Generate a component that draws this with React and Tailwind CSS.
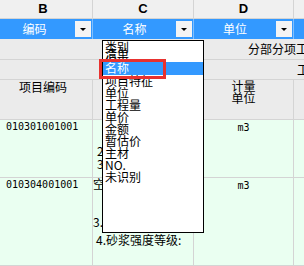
import React from 'react';

const cjk = "font-['Noto_Sans_CJK_SC',sans-serif]";
const mono = "font-['DejaVu_Sans_Mono',monospace] text-[10px]";

const DropButton = () => (
  <div className="w-[16px] h-[16px] mr-[1px] bg-[#f4f4f4] flex items-center justify-center shrink-0">
    <div className="w-0 h-0 border-l-[3px] border-r-[3px] border-t-[3px] border-l-transparent border-r-transparent border-t-black" />
  </div>
);

const options = [
  { label: '类别', h: 'h-[7px]' },
  { label: '清单', h: 'h-[8px]' },
  { label: '编码', h: 'h-[6px]' },
  { label: '名称', h: 'h-[13px]', selected: true },
  { label: '项目特征', h: 'h-[12px]' },
  { label: '单位', h: 'h-[12px]' },
  { label: '工程量', h: 'h-[12px]' },
  { label: '单价', h: 'h-[12px]' },
  { label: '金额', h: 'h-[12px]' },
  { label: '暂估价', h: 'h-[12px]' },
  { label: '主材', h: 'h-[12px]' },
  { label: 'NO.', h: 'h-[12px]' },
  { label: '未识别', h: 'h-[12px]' },
];

export default function App() {
  return (
    <div className={`relative w-[304px] h-[266px] overflow-hidden bg-white text-[12px] text-black ${cjk}`}>
      {/* column letters */}
      <div className="flex h-[19px] bg-[#f0f0f0] border-b border-[#d4d4d4]">
        <div className="w-[99px] -ml-[6px] shrink-0 border-r border-[#d4d4d4] flex items-center justify-center font-['Liberation_Sans',sans-serif] font-bold text-[13px]">B</div>
        <div className="w-[101px] shrink-0 border-r border-[#d4d4d4] flex items-center justify-center font-['Liberation_Sans',sans-serif] font-bold text-[13px]">C</div>
        <div className="w-[100px] shrink-0 border-r border-[#d4d4d4] flex items-center justify-center font-['Liberation_Sans',sans-serif] font-bold text-[13px]">D</div>
        <div className="flex-1" />
      </div>

      {/* mapping row */}
      <div className="flex h-[20px] bg-[#3399ff] text-white">
        <div className="w-[99px] -ml-[6px] shrink-0 border-r border-[#7fbfff] flex items-center">
          <span className="flex-1 text-center">编码</span>
          <DropButton />
        </div>
        <div className="w-[101px] shrink-0 border-r border-[#7fbfff] flex items-center">
          <span className="flex-1 text-center">名称</span>
          <DropButton />
        </div>
        <div className="w-[100px] shrink-0 border-r border-[#7fbfff] flex items-center">
          <span className="flex-1 text-center">单位</span>
          <DropButton />
        </div>
        <div className="flex-1" />
      </div>

      {/* title rows */}
      <div className="h-[21px] bg-[#ebebeb] border-b border-[#d4d4d4] flex items-center pl-[248px] whitespace-nowrap text-[12px]">
        分部分项工程量清单
      </div>
      <div className="h-[20px] bg-[#ebebeb] border-b border-[#d4d4d4] flex items-center pl-[297px] whitespace-nowrap text-[12px]">
        工程名称：
      </div>

      {/* header */}
      <div className="flex h-[40px] bg-[#ebebeb] border-b border-[#d4d4d4] leading-[12px]">
        <div className="w-[99px] -ml-[6px] shrink-0 border-r border-[#d4d4d4] text-center pt-[1px]">项目编码</div>
        <div className="w-[101px] shrink-0 border-r border-[#d4d4d4] text-center pt-[1px]">项目名称</div>
        <div className="w-[100px] shrink-0 border-r border-[#d4d4d4] text-center">
          <div>计量</div>
          <div>单位</div>
        </div>
        <div className="flex-1" />
      </div>

      {/* data row 1 */}
      <div className="flex h-[58px] bg-[#eafff1] border-b border-[#d4d4d4] leading-[12px]">
        <div className={`w-[99px] -ml-[6px] shrink-0 border-r border-[#d4d4d4] pl-[12px] pt-[1px] ${mono}`}>010301001001</div>
        <div className="w-[101px] shrink-0 border-r border-[#d4d4d4] pl-[4px] pt-[24px] leading-[13px] whitespace-nowrap overflow-hidden">
          <div>2.墙体类型:</div>
          <div>3.砂浆强度等级:</div>
        </div>
        <div className={`w-[100px] shrink-0 border-r border-[#d4d4d4] text-center pt-[2px] ${mono}`}>m3</div>
        <div className="flex-1" />
      </div>

      {/* data row 2 */}
      <div className="flex h-[88px] bg-[#eafff1] border-b border-[#d4d4d4] leading-[12px]">
        <div className={`w-[99px] -ml-[6px] shrink-0 border-r border-[#d4d4d4] pl-[12px] pt-[1px] ${mono}`}>010304001001</div>
        <div className="w-[101px] shrink-0 border-r border-[#d4d4d4] whitespace-nowrap overflow-hidden">
          <div>空心砖墙</div>
          <div className="mt-[26px]">3.墙体厚度:</div>
          <div className="mt-[6px] pl-[3px]">4.砂浆强度等级:</div>
        </div>
        <div className={`w-[100px] shrink-0 border-r border-[#d4d4d4] text-center pt-[2px] ${mono}`}>m3</div>
        <div className="flex-1" />
      </div>

      {/* open field list */}
      <div className="absolute left-[102px] top-[40px] w-[102px] h-[193px] bg-white border border-black leading-[12px]">
        {options.map((o) => (
          <div
            key={o.label}
            className={`relative ${o.h} pl-[2px] whitespace-nowrap ${o.selected ? 'bg-[#3399ff] text-white' : ''}`}
          >
            <div className="h-[12px]">{o.label}</div>
          </div>
        ))}
      </div>

      {/* annotation */}
      <div className="absolute left-[99px] top-[59px] w-[67px] h-[20px] border-[3px] border-[#e8322f]" />
    </div>
  );
}
